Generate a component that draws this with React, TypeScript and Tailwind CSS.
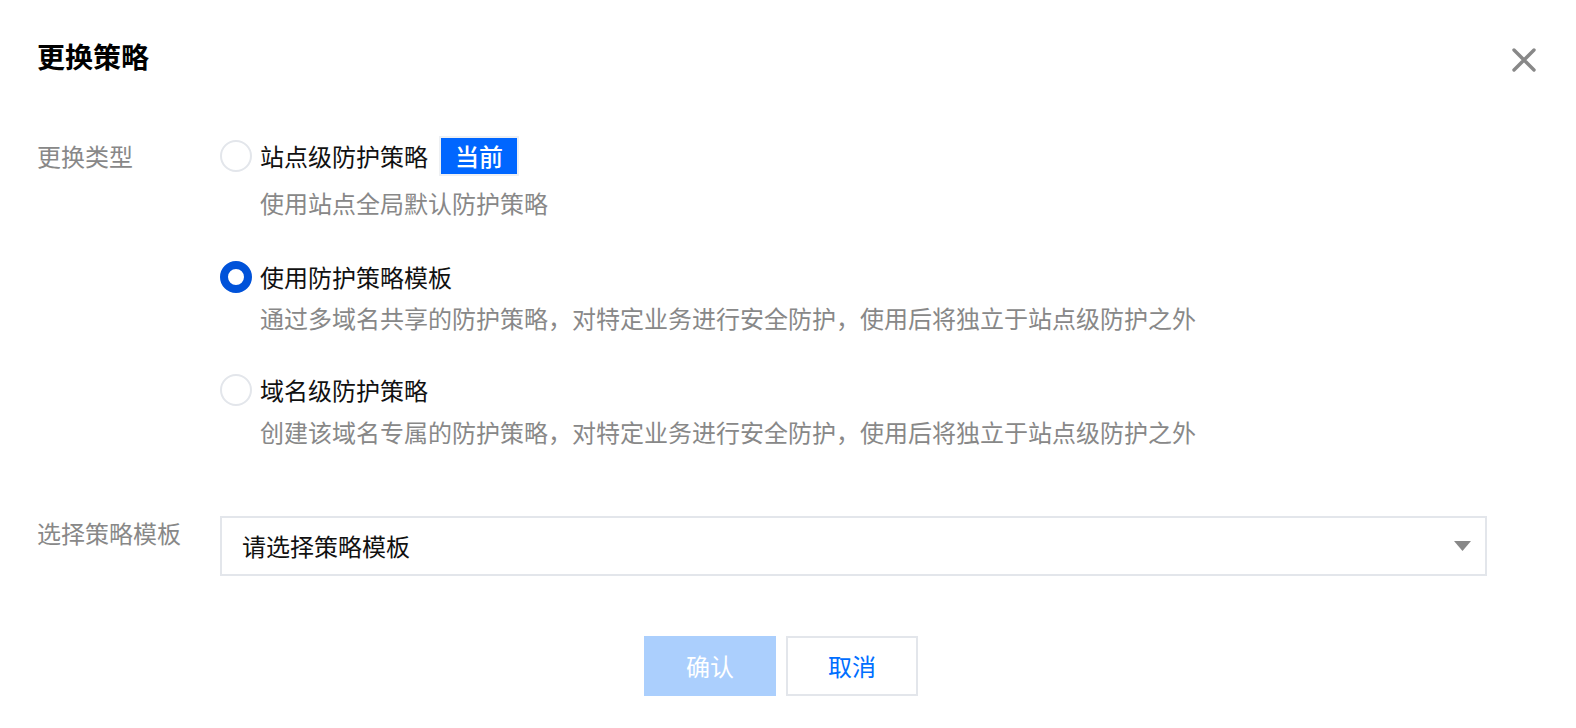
import React from "react";

type Option = {
  title: string;
  desc: string;
  checked?: boolean;
  current?: boolean;
  wrap: string;
  descGap: string;
};

const options: Option[] = [
  {
    title: "站点级防护策略",
    desc: "使用站点全局默认防护策略",
    current: true,
    wrap: "",
    descGap: "mt-[7px]",
  },
  {
    title: "使用防护策略模板",
    desc: "通过多域名共享的防护策略，对特定业务进行安全防护，使用后将独立于站点级防护之外",
    checked: true,
    wrap: "mt-[34px]",
    descGap: "mt-[1px]",
  },
  {
    title: "域名级防护策略",
    desc: "创建该域名专属的防护策略，对特定业务进行安全防护，使用后将独立于站点级防护之外",
    wrap: "mt-[32px]",
    descGap: "mt-[2px]",
  },
];

function Radio({ checked }: { checked?: boolean }) {
  if (checked) {
    return (
      <span className="box-border block w-[32px] h-[32px] rounded-full border-[8px] border-[#0052d9] bg-white" />
    );
  }
  return (
    <span className="box-border block w-[32px] h-[32px] rounded-full border-2 border-[#e3e6eb] bg-white" />
  );
}

function OptionItem({ o }: { o: Option }) {
  return (
    <div className={o.wrap}>
      <div className="flex items-center h-[40px] gap-[8px]">
        <Radio checked={o.checked} />
        <span className="text-[24px] leading-[40px] text-[#111]">{o.title}</span>
        {o.current && (
          <span className="ml-[3px] border-2 border-[#eef0f3]">
            <span className="block bg-[#0066ff] text-white text-[24px] leading-[36px] px-[14px] font-medium">
              当前
            </span>
          </span>
        )}
      </div>
      <div className={`${o.descGap} pl-[40px] text-[24px] leading-[40px] text-[#888]`}>
        {o.desc}
      </div>
    </div>
  );
}

export default function App() {
  return (
    <div className="w-[1576px] h-[728px] bg-white font-['Noto_Sans_CJK_SC','Noto_Sans',sans-serif] overflow-hidden">
      <div className="flex justify-between items-start pt-[36px] pl-[37px] pr-[40px]">
        <h2 className="text-[28px] leading-[40px] font-bold text-black">更换策略</h2>
        <button className="mt-[12px] text-[#888]" aria-label="close">
          <svg width="24" height="24" viewBox="0 0 24 24" fill="none">
            <path d="M2 2L22 22M22 2L2 22" stroke="#888" strokeWidth="3.4" strokeLinecap="round" />
          </svg>
        </button>
      </div>

      <div className="pl-[37px] pr-[51px]">
        <div className="flex mt-[60px]">
          <div className="w-[183px] text-[24px] leading-[40px] text-[#888]">更换类型</div>
          <div className="flex-1">
            {options.map((o) => (
              <OptionItem key={o.title} o={o} />
            ))}
          </div>
        </div>

        <div className="flex mt-[64px]">
          <div className="w-[183px] -mt-[3px] text-[24px] leading-[40px] text-[#888]">选择策略模板</div>
          <div className="box-border w-[1267px] h-[60px] border-2 border-[#e3e6eb] flex items-center justify-between pl-[20px] pr-[14px]">
            <span className="text-[24px] leading-[40px] text-[#111]">请选择策略模板</span>
            <svg width="17" height="10" viewBox="0 0 17 10">
              <path d="M0 0H17L8.5 10Z" fill="#888" />
            </svg>
          </div>
        </div>

        <div className="flex justify-center gap-[10px] mt-[60px]">
          <button className="w-[132px] h-[60px] bg-[#abcffd] text-white text-[24px]">确认</button>
          <button className="box-border w-[132px] h-[60px] border-2 border-[#e3e6eb] bg-white text-[#006eff] text-[24px]">
            取消
          </button>
        </div>
      </div>
    </div>
  );
}
